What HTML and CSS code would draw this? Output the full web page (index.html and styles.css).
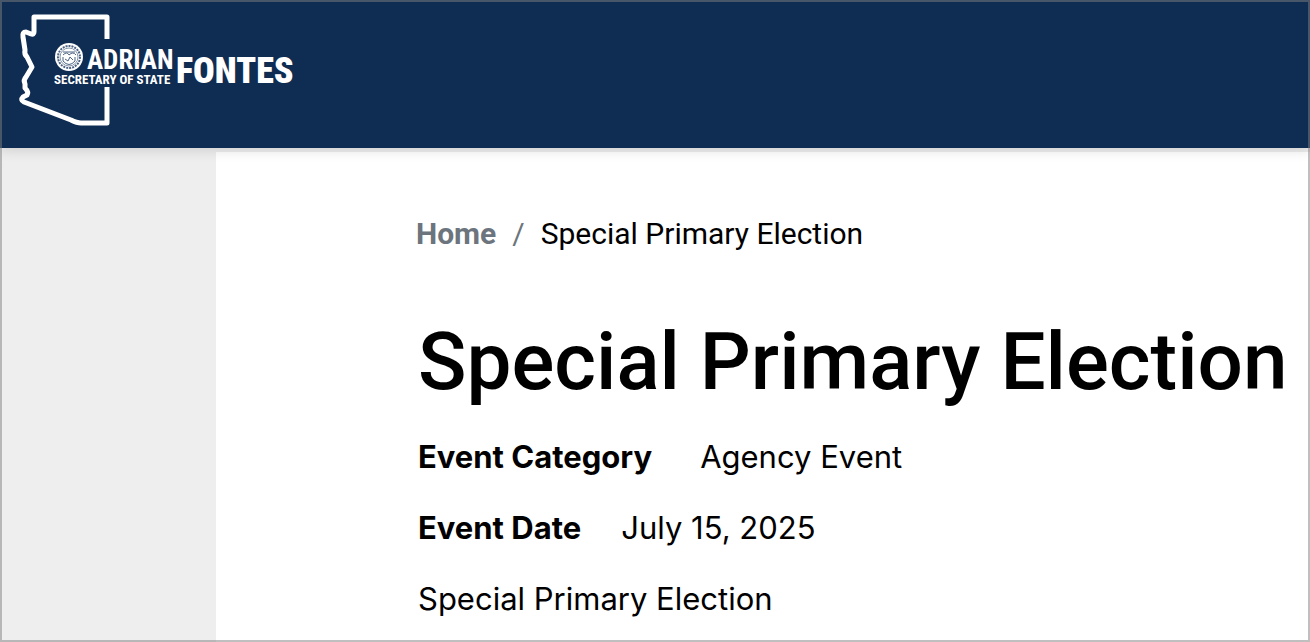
FILE: index.html
```html
<!DOCTYPE html>
<html lang="en">
<head>
<meta charset="utf-8">
<meta name="viewport" content="width=device-width, initial-scale=1">
<title>Special Primary Election</title>
<link rel="stylesheet" href="styles.css">
</head>
<body>
<header class="site-header">
  <a class="logo" href="#" aria-label="Adrian Fontes, Secretary of State">
    <svg class="logo-art" width="280" height="116" viewBox="18 12 280 116" fill="none" aria-hidden="true">
      <path class="logo-outline" d="M107 39V17H34V32Q34 35 31 34L26 32Q22 32 23 37L25 50Q24 54 27 57L32 67L26 77Q23 80 25 84V88Q29 92 27 95L23 97Q20 100 24 102L71 120Q77 123 81 123H107V87"/>
      <circle cx="69" cy="57" r="14" fill="#fff"/>
      <circle cx="69" cy="57" r="11" stroke="#4d6282" stroke-width="2" stroke-dasharray="2 1"/>
      <circle cx="69" cy="57" r="9" stroke="#8494aa"/>
      <path d="M63 52H75M63 55Q67 51 69 55Q73 51 76 55M63 57V61Q69 68 75 61V57M65 59L68 61L70 57L73 60" stroke="#4d6282"/>
      <text class="logo-first" x="87" y="69">ADRIAN</text>
      <text class="logo-office" x="54" y="84">SECRETARY OF STATE</text>
      <text class="logo-last" x="176" y="83">FONTES</text>
    </svg>
  </a>
</header>
<div class="page">
  <main class="content">
    <nav aria-label="Breadcrumb">
      <ol class="breadcrumb">
        <li><a class="crumb-link" href="#">Home</a></li>
        <li class="crumb-current" aria-current="page">Special Primary Election</li>
      </ol>
    </nav>
    <article class="event">
      <h1 class="title">Special Primary Election</h1>
      <dl class="details">
        <div class="detail detail-wide"><dt>Event Category</dt><dd>Agency Event</dd></div>
        <div class="detail"><dt>Event Date</dt><dd>July 15, 2025</dd></div>
      </dl>
      <p class="summary">Special Primary Election</p>
    </article>
  </main>
</div>
</body>
</html>
```
FILE: styles.css
```css
* { box-sizing: border-box; }
body {
  margin: 0;
  min-height: 100vh;
  display: flex;
  flex-direction: column;
  position: relative;
  background: #eee;
  color: #000;
  font-family: Inter, "Liberation Sans", sans-serif;
  font-size: 31px;
  line-height: 40px;
}
body::after {
  content: "";
  position: absolute;
  inset: 0;
  border: 2px solid rgba(128, 128, 128, 0.5);
  pointer-events: none;
}
.site-header {
  background: #0f2c52;
  padding: 12px 18px 20px;
  box-shadow: 0 2px 12px rgba(0, 0, 0, 0.14);
  position: relative;
}
.logo { display: block; width: max-content; }
.logo-art { display: block; }
.logo-outline { stroke: #fff; stroke-width: 5; stroke-linejoin: round; }
.logo-first, .logo-office, .logo-last {
  fill: #fff;
  font-family: "Roboto Condensed", Roboto, sans-serif;
  font-weight: 700;
}
.logo-first { font-size: 27px; }
.logo-office { font-size: 13px; }
.logo-last { font-size: 36px; font-weight: 900; }
.page {
  flex: 1;
  display: flex;
  padding: 4px 0 0 216px;
}
.content {
  flex: 1;
  background: #fff;
  padding: 62px 20px 20px 200px;
}
.breadcrumb {
  display: flex;
  margin: 0 0 58px;
  padding: 0;
  list-style: none;
  font-family: Roboto, sans-serif;
  font-size: 30px;
}
.crumb-link { color: #6c757d; font-weight: 700; text-decoration: none; }
.crumb-current::before { content: "/"; color: #6c757d; padding: 0 16px; }
.event { padding-left: 2px; }
.title {
  margin: 0 0 25px;
  font-family: Roboto, sans-serif;
  font-size: 80px;
  font-weight: 500;
  line-height: 100px;
}
.details { margin: 0; }
.detail { display: flex; gap: 40px; margin-bottom: 31px; }
.detail-wide { gap: 48px; }
.detail dt { font-weight: 700; }
.detail dd { margin: 0; }
.summary { margin: 0; }
```
